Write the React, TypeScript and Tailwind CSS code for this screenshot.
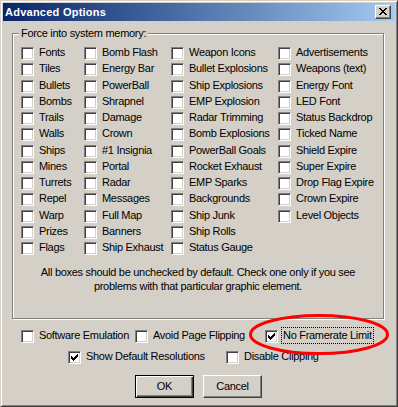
import React from "react";

const col1 = ["Fonts", "Tiles", "Bullets", "Bombs", "Trails", "Walls", "Ships", "Mines", "Turrets", "Repel", "Warp", "Prizes", "Flags"];
const col2 = ["Bomb Flash", "Energy Bar", "PowerBall", "Shrapnel", "Damage", "Crown", "#1 Insignia", "Portal", "Radar", "Messages", "Full Map", "Banners", "Ship Exhaust"];
const col3 = ["Weapon Icons", "Bullet Explosions", "Ship Explosions", "EMP Explosion", "Radar Trimming", "Bomb Explosions", "PowerBall Goals", "Rocket Exhaust", "EMP Sparks", "Backgrounds", "Ship Junk", "Ship Rolls", "Status Gauge"];
const col4 = ["Advertisements", "Weapons (text)", "Energy Font", "LED Font", "Status Backdrop", "Ticked Name", "Shield Expire", "Super Expire", "Drop Flag Expire", "Crown Expire", "Level Objects"];

function Box({ checked }: { checked?: boolean }) {
  return (
    <span className="block w-[13px] h-[13px] shrink-0 bg-white border border-t-[#808080] border-l-[#808080] border-b-white border-r-white shadow-[inset_1px_1px_0_#404040,inset_-1px_-1px_0_#d4d0c8]">
      {checked && (
        <svg className="block ml-[2px] mt-[2px]" width="7" height="7" shapeRendering="crispEdges">
          <rect x="0" y="2" width="1" height="3" fill="#000" />
          <rect x="1" y="3" width="1" height="3" fill="#000" />
          <rect x="2" y="4" width="1" height="3" fill="#000" />
          <rect x="3" y="3" width="1" height="3" fill="#000" />
          <rect x="4" y="2" width="1" height="3" fill="#000" />
          <rect x="5" y="1" width="1" height="3" fill="#000" />
          <rect x="6" y="0" width="1" height="3" fill="#000" />
        </svg>
      )}
    </span>
  );
}

function Check({ label, checked, focus }: { label: string; checked?: boolean; focus?: boolean }) {
  return (
    <div className="flex items-center h-[16.25px]">
      <Box checked={checked} />
      <span
        className={`ml-[5px] -mt-[2px] leading-[13px] whitespace-nowrap ${
          focus ? "outline-1 outline-dotted outline-black outline-offset-1" : ""
        }`}
      >
        {label}
      </span>
    </div>
  );
}

function Column({ items, width }: { items: string[]; width: string }) {
  return (
    <div className={`flex flex-col ${width}`}>
      {items.map((t) => (
        <Check key={t} label={t} />
      ))}
    </div>
  );
}

export default function App() {
  return (
    <div
      className="relative w-[398px] h-[407px] bg-[#d4d0c8] border border-t-[#d4d0c8] border-l-[#d4d0c8] border-r-[#404040] border-b-[#404040] p-[2px] shadow-[inset_1px_1px_0_#fff,inset_-1px_-1px_0_#808080] text-black text-[11px] tracking-[-0.3px]"
      style={{ fontFamily: '"Liberation Sans", Arial, sans-serif' }}
    >
      {/* title bar */}
      <div className="flex items-center h-[18px] bg-gradient-to-r from-[#0a246a] to-[#a6caf0]">
        <span className="pl-[2px] leading-[18px] text-white font-bold tracking-[0.25px]">Advanced Options</span>
        <button className="ml-auto mr-[4px] flex items-center justify-center w-[16px] h-[14px] bg-[#d4d0c8] border border-t-white border-l-white border-r-[#404040] border-b-[#404040] shadow-[inset_-1px_-1px_0_#808080]">
          <svg width="8" height="7" shapeRendering="crispEdges" className="block -mt-[1px]">
            <path d="M0 0h2l2 2.5 2-2.5h2L5 3.5 8 7H6L4 4.5 2 7H0l3-3.5z" fill="#000" />
          </svg>
        </button>
      </div>

      {/* group box */}
      <div className="relative ml-[9px] mt-[12px] w-[372px] h-[286px] border border-[#808080] shadow-[inset_1px_1px_0_#fff,1px_1px_0_#fff] pl-[8px] pt-[11.5px]">
        <span className="absolute left-[6px] top-[-7px] px-[2px] leading-[13px] bg-[#d4d0c8]">Force into system memory:</span>
        <div className="flex">
          <Column items={col1} width="w-[63px]" />
          <Column items={col2} width="w-[87px]" />
          <Column items={col3} width="w-[107px]" />
          <Column items={col4} width="w-[90px]" />
        </div>
        <p className="mt-[8.5px] -ml-[8px] leading-[14px] text-center">
          All boxes should be unchecked by default. Check one only if you see
          <br />
          problems with that particular graphic element.
        </p>
      </div>

      {/* option rows */}
      <div className="flex items-center h-[15px] mt-[10px] pl-[18px]">
        <div className="w-[114px]">
          <Check label="Software Emulation" />
        </div>
        <div className="w-[130px]">
          <Check label="Avoid Page Flipping" />
        </div>
        <div className="flex items-center h-[16.25px]">
          <Box checked />
          <span className="ml-[5px] -mt-[2px] leading-[13px] whitespace-nowrap outline-1 outline-dotted outline-black outline-offset-1">
            No Framerate Limit
          </span>
        </div>
      </div>
      <div className="flex items-center h-[15px] mt-[6px] pl-[65px]">
        <div className="w-[158px]">
          <Check label="Show Default Resolutions" checked />
        </div>
        <Check label="Disable Clipping" />
      </div>

      {/* buttons */}
      <div className="flex gap-[9px] mt-[10px] pl-[132px]">
        <button className="w-[59px] h-[23px] bg-[#d4d0c8] border border-black shadow-[inset_1px_1px_0_#fff,inset_-1px_-1px_0_#404040,inset_-2px_-2px_0_#808080] leading-[13px]">
          OK
        </button>
        <button className="w-[59px] h-[23px] bg-[#d4d0c8] border border-t-white border-l-white border-r-[#404040] border-b-[#404040] shadow-[inset_-1px_-1px_0_#808080] leading-[13px]">
          Cancel
        </button>
      </div>

      {/* red annotation ellipse */}
      <svg className="absolute left-[247px] top-[312px] pointer-events-none" width="142" height="43">
        <ellipse cx="71" cy="21.5" rx="68.5" ry="19" fill="none" stroke="#ff0000" strokeWidth="3" />
      </svg>
    </div>
  );
}
